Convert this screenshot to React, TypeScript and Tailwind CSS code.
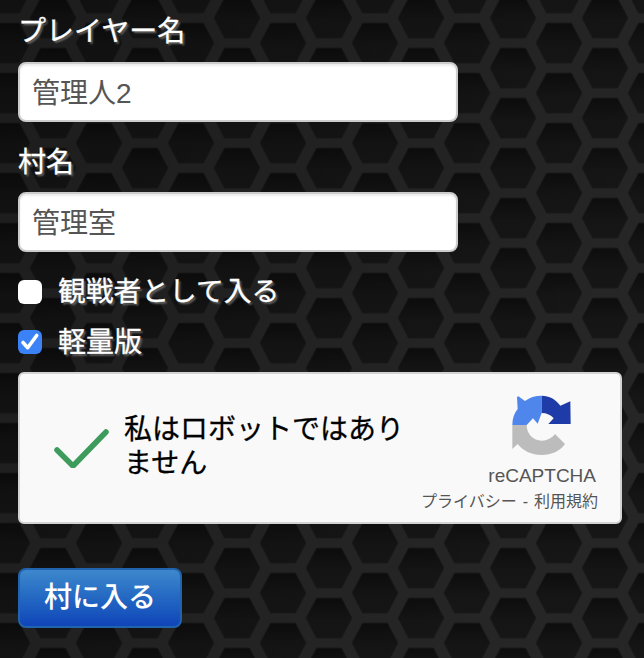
import { useState } from 'react';

function HexBackground() {
  const hex = (cx: number, cy: number) =>
    `${cx - 23},${cy} ${cx - 12.5},${cy - 20} ${cx + 12.5},${cy - 20} ${cx + 23},${cy} ${cx + 12.5},${cy + 20} ${cx - 12.5},${cy + 20}`;
  const centers = [
    [53, 18],
    [53, 68],
    [7, 43],
    [99, 43],
    [7, -7],
    [99, -7],
  ];
  return (
    <svg className="absolute inset-0 h-full w-full" aria-hidden="true">
      <defs>
        <linearGradient id="hexFill" x1="0" y1="0" x2="0" y2="1">
          <stop offset="0" stopColor="#0d0d0d" />
          <stop offset="0.55" stopColor="#151515" />
          <stop offset="1" stopColor="#161616" />
        </linearGradient>
        <linearGradient id="shade" x1="0" y1="0" x2="1" y2="0.4">
          <stop offset="0" stopColor="#000" stopOpacity="0.25" />
          <stop offset="1" stopColor="#000" stopOpacity="0" />
        </linearGradient>
        <pattern id="hexes" width="92" height="50" patternUnits="userSpaceOnUse">
          <rect width="92" height="50" fill="#262626" />
          {centers.map(([x, y]) => (
            <polygon key={`${x}-${y}`} points={hex(x, y)} fill="url(#hexFill)" stroke="#1a1a1a" strokeWidth="1" />
          ))}
        </pattern>
      </defs>
      <rect width="100%" height="100%" fill="url(#hexes)" />
      <rect width="100%" height="100%" fill="url(#shade)" />
    </svg>
  );
}

function RecaptchaLogo() {
  return (
    <svg viewBox="0 0 225 216" className="h-[72px] w-[75px]" aria-hidden="true">
      <path d="M22 108H65L84 88 98 104 110 72 110 20C90 20 74 25 60 36L40 22 36 24 38 60C28 72 22 88 22 108Z" fill="#4f86ec" />
      <path d="M110 20C133 20 152 30 166 50L196 37 197 105H130L146 88C138 78 125 72 110 72Z" fill="#1f3ba8" />
      <path d="M22 108H65C65 135 85 155 110 155 127 155 141 147 150 135L180 165C165 186 140 198 110 198 80 198 55 186 38 165L22 180Z" fill="#bcbcbc" />
    </svg>
  );
}

export default function App() {
  const [spectator, setSpectator] = useState(false);
  const [light, setLight] = useState(true);

  const labelCls = "block text-[28px] leading-[40px] text-white [-webkit-text-stroke:0.3px_white] [text-shadow:2px_2px_2px_#666]";
  const inputCls =
    "block h-[60px] w-[440px] rounded-lg border-2 border-[#cccccc] bg-white px-[12px] pb-[3px] text-[28px] text-[#555555] shadow-[inset_0_2px_2px_rgba(0,0,0,0.08)] outline-none";

  return (
    <div className="relative min-h-screen overflow-hidden bg-[#151515] font-['Liberation_Sans','Noto_Sans_CJK_JP',sans-serif]">
      <HexBackground />
      <form className="relative px-[18px] pt-3" onSubmit={(e) => e.preventDefault()}>
        <label className={labelCls}>プレイヤー名</label>
        <input className={`${inputCls} mt-[10px]`} defaultValue="管理人2" />
        <label className={`${labelCls} mt-[21px]`}>村名</label>
        <input className={`${inputCls} mt-[9px]`} defaultValue="管理室" />

        <label className="mt-[15px] flex h-[50px] items-center gap-4 text-[27.75px] text-white [-webkit-text-stroke:0.3px_white] [text-shadow:2px_2px_2px_#666]">
          <input
            type="checkbox"
            checked={spectator}
            onChange={(e) => setSpectator(e.target.checked)}
            className="h-6 w-6 appearance-none rounded-md bg-white"
          />
          観戦者として入る
        </label>
        <label className="flex h-[50px] items-center gap-4 text-[28px] text-white [-webkit-text-stroke:0.3px_white] [text-shadow:2px_2px_2px_#666]">
          <span className="relative h-6 w-6">
            <input
              type="checkbox"
              checked={light}
              onChange={(e) => setLight(e.target.checked)}
              className="block h-6 w-6 appearance-none rounded-md bg-white checked:bg-[#3b82f6]"
            />
            {light && (
              <svg viewBox="0 0 24 24" className="pointer-events-none absolute inset-0 h-6 w-6" fill="none" stroke="white" strokeWidth="3.6" strokeLinecap="round" strokeLinejoin="round">
                <path d="M5 12.5l4.7 5.2L18.7 5.5" />
              </svg>
            )}
          </span>
          <span className="pt-px">軽量版</span>
        </label>

        <div className="mt-[5px] flex h-[152px] w-[604px] items-center rounded-md border-2 border-[#d3d3d3] bg-[#f9f9f9]">
          <svg viewBox="0 0 60 40" className="ml-[34px] h-10 w-[60px] shrink-0" fill="none" stroke="#3d9b5c" strokeWidth="5.5" strokeLinecap="round" strokeLinejoin="round">
            <path d="M3 22l16 16L52 4" />
          </svg>
          <div className="ml-[10px] -mt-[2px] w-[290px] text-[28px] leading-[34px] text-black [-webkit-text-stroke:0.3px_black]">私はロボットではありません</div>
          <div className="ml-auto flex flex-col items-end pr-[22px] pt-1">
            <div className="mr-[18px]">
              <RecaptchaLogo />
            </div>
            <div className="mr-[2px] mt-[3px] text-[19px] leading-6 text-[#555555]">reCAPTCHA</div>
            <div className="mt-[4px] flex whitespace-nowrap text-[16px] leading-5 text-[#555555]">
              <span>プライバシー</span>
              <span className="mx-[6px]">-</span>
              <span>利用規約</span>
            </div>
          </div>
        </div>

        <button
          type="submit"
          className="mt-11 h-[60px] w-[164px] rounded-lg border-2 border-[#2164ad] bg-gradient-to-b from-[#3d88cc] to-[#1144b8] text-[28px] font-medium text-white"
        >
          村に入る
        </button>
      </form>
    </div>
  );
}
